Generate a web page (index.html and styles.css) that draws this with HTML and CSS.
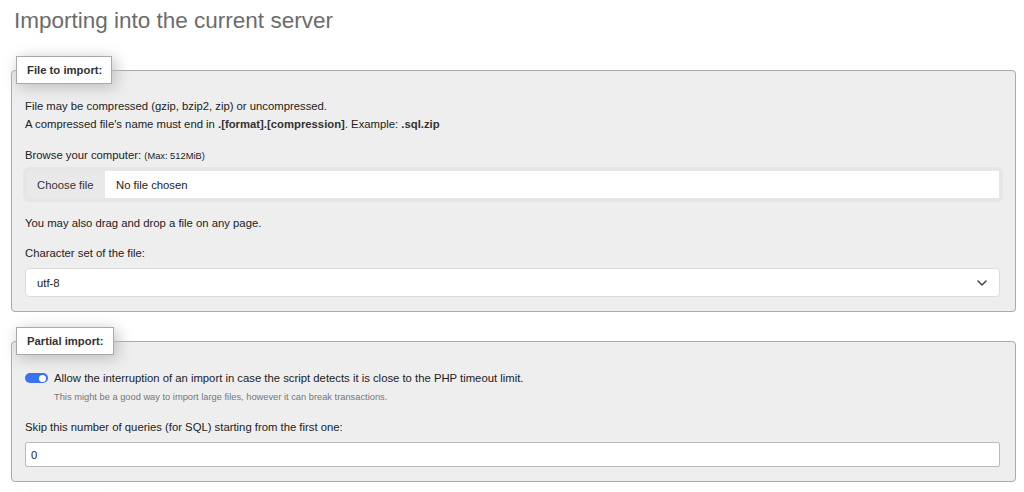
FILE: index.html
```html
<!DOCTYPE html>
<html lang="en">
<head>
<meta charset="utf-8">
<title>Import</title>
<link rel="stylesheet" href="styles.css">
</head>
<body>
<div class="page">
  <h2 class="title">Importing into the current server</h2>

  <fieldset class="box">
    <legend class="box-legend">File to import:</legend>
    <div class="box-body">
      <p class="para">File may be compressed (gzip, bzip2, zip) or uncompressed.<br>
      A compressed file's name must end in <b>.[format].[compression]</b>. Example: <b>.sql.zip</b></p>
      <div class="label browse">Browse your computer: <small class="small">(Max: 512MiB)</small></div>
      <div class="file-input">
        <span class="file-btn">Choose file</span>
        <span class="file-name">No file chosen</span>
      </div>
      <p class="para drag">You may also drag and drop a file on any page.</p>
      <div class="label charset">Character set of the file:</div>
      <div class="select">
        <span>utf-8</span>
        <svg class="chev" width="10" height="6" viewBox="0 0 10 6"><path d="M1 1l4 4 4-4" fill="none" stroke="#444" stroke-width="1.5" stroke-linecap="round" stroke-linejoin="round"/></svg>
      </div>
    </div>
  </fieldset>

  <fieldset class="box second">
    <legend class="box-legend">Partial import:</legend>
    <div class="box-body">
      <div class="switch-row">
        <span class="switch"><span class="knob"></span></span>
        <span>Allow the interruption of an import in case the script detects it is close to the PHP timeout limit.</span>
      </div>
      <div class="hint">This might be a good way to import large files, however it can break transactions.</div>
      <div class="label skip">Skip this number of queries (for SQL) starting from the first one:</div>
      <div class="text-input">0</div>
    </div>
  </fieldset>

  <fieldset class="box third">
    <legend class="box-legend empty-legend"></legend>
    <div class="box-body filler"></div>
  </fieldset>
</div>
</body>
</html>
```

FILE: styles.css
```css
html, body {
  margin: 0;
  padding: 0;
  background: #fff;
}
body {
  font-family: "Liberation Sans", Arial, sans-serif;
  font-size: 11.3px;
  color: #222;
}
.page {
  padding: 0 8px 0 11px;
}
.title {
  margin: 7px 0 0 3px;
  font-size: 22.5px;
  line-height: 27px;
  font-weight: normal;
  color: #6c6c6c;
}
.box {
  margin: 22px 0 0 0;
  padding: 0 4px 14px 4px;
  border: 1px solid #aaa;
  border-radius: 4px;
  background: #eee;
  min-width: 0;
}
.second {
  margin-top: 15px;
}
.third {
  margin-top: 20px;
}
.box-legend {
  background: #fff;
  border: 1px solid #aaa;
  padding: 6px 9px 6px 10px;
  line-height: 14px;
  font-weight: bold;
  color: #333;
  box-shadow: 3px 3px 15px #bbb;
}
.empty-legend {
  width: 95px;
  height: 28px;
  box-sizing: border-box;
  padding: 0;
}
.filler {
  height: 40px;
}
.box-body {
  padding: 13px 11px 0 9px;
}
.para {
  margin: 0;
  line-height: 18px;
}
.para b {
  color: #333;
}
.label {
  line-height: 18px;
}
.browse {
  margin-top: 13px;
}
.small {
  font-size: 9.3px;
}
.file-input {
  display: flex;
  margin: 2px -3px 0 -2px;
  height: 35px;
  box-sizing: border-box;
  border: 4px solid #e6e6e6;
  border-radius: 6px;
  background: #e9e9e9;
}
.file-btn {
  display: flex;
  align-items: center;
  padding: 0 11px 0 10px;
  width: 78px;
  box-sizing: border-box;
  color: #333;
}
.file-name {
  flex: 1;
  display: flex;
  align-items: center;
  padding-left: 11px;
  background: #fff;
  color: #222;
}
.drag {
  margin-top: 12px;
}
.charset {
  margin-top: 12px;
}
.select {
  display: flex;
  align-items: center;
  justify-content: space-between;
  margin-top: 6px;
  height: 29px;
  box-sizing: border-box;
  padding: 0 12px 0 11px;
  background: #fff;
  border: 1px solid #dcdcdc;
  border-radius: 4px;
}
.chev {
  display: block;
}
.switch-row {
  display: flex;
  align-items: center;
  gap: 6px;
  margin-top: 1px;
  line-height: 18px;
}
.switch {
  display: flex;
  align-items: center;
  justify-content: flex-end;
  width: 23px;
  height: 10px;
  box-sizing: border-box;
  padding: 0 2px;
  border-radius: 5px;
  background: #3a72ef;
}
.knob {
  width: 7px;
  height: 7px;
  border-radius: 50%;
  background: #fff;
}
.hint {
  margin-top: 2px;
  padding-left: 29px;
  font-size: 9.3px;
  line-height: 17px;
  color: #777;
}
.skip {
  margin-top: 12px;
}
.text-input {
  margin-top: 6px;
  height: 25px;
  box-sizing: border-box;
  padding: 0 5px;
  display: flex;
  align-items: center;
  background: #fff;
  border: 1px solid #bbb;
  border-radius: 2px;
  color: #222;
}
```
